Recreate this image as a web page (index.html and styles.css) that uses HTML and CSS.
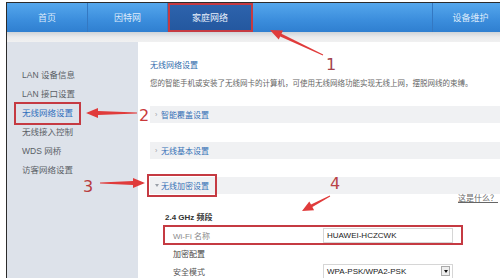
FILE: index.html
```html
<!DOCTYPE html>
<html lang="zh-CN">

<head>
    <meta charset="UTF-8">
    <title>家庭网络 - 无线网络设置</title>
    <link rel="stylesheet" href="styles.css">
</head>

<body>
    <div class="frame">
        <nav class="nav">
            <a class="tab tab-home">首页</a>
            <a class="tab tab-net">因特网</a>
            <a class="tab tab-home-net active mark">家庭网络</a>
            <span class="nav-fill"></span>
            <a class="tab tab-device">设备维护</a>
        </nav>
        <div class="shade"></div>

        <div class="main">
            <ul class="side">
                <li>LAN 设备信息</li>
                <li>LAN 接口设置</li>
                <li class="current"><span class="mark">无线网络设置</span></li>
                <li>无线接入控制</li>
                <li>WDS 网桥</li>
                <li>访客网络设置</li>
            </ul>

            <div class="content">
                <h3 class="title">无线网络设置</h3>
                <p class="desc">您的智能手机或安装了无线网卡的计算机，可使用无线网络功能实现无线上网，摆脱网线的束缚。</p>

                <div class="bar bar-first"><span class="caret">›</span>智能覆盖设置</div>
                <div class="bar"><span class="caret">›</span>无线基本设置</div>
                <div class="bar open"><span class="mark"><span class="caret caret-down"></span>无线加密设置</span></div>

                <div class="help"><a>这是什么？</a></div>

                <div class="form">
                    <div class="band">2.4 GHz 频段</div>
                    <div class="row mark">
                        <label>Wi-Fi 名称</label>
                        <span class="field">HUAWEI-HCZCWK</span>
                    </div>
                    <div class="group">加密配置</div>
                    <div class="row row-mode">
                        <label>安全模式</label>
                        <span class="field select">WPA-PSK/WPA2-PSK<span class="drop"></span></span>
                    </div>
                </div>
            </div>
        </div>
    </div>

    <!-- пометки поверх скриншота: стрелки и номера шагов -->
    <svg class="notes" width="500" height="278" viewBox="0 0 500 278">
        <g fill="#e03b3b">
            <polygon points="323.2,54.5 281.5,33.8 283,30.6 270,30 278.7,39.6 280.2,36.5 322.8,55.5" />
            <polygon points="137,112.5 98,111 98,108 86,113 98,118 98,115 137,113.5" />
            <polygon points="100,182.5 133,181 133,178 145,183 133,188 133,185 100,183.5" />
            <polygon points="329.8,195.6 311,204.5 309.3,201.4 302,211 314.1,210.2 312.4,207.1 330.2,196.4" />
        </g>
        <g class="num">
            <text x="326" y="70" fill="#a4434c">1</text>
            <text x="139" y="121" fill="#c9393a">2</text>
            <text x="83" y="192" fill="#b83c3e">3</text>
            <text x="330" y="189" fill="#b94246">4</text>
        </g>
    </svg>
</body>

</html>
```

FILE: styles.css
```css
* {
    box-sizing: border-box;
}

body {
    margin: 0;
    width: 500px;
    height: 278px;
    overflow: hidden;
    background-color: #fff;
    font-family: "Liberation Sans", "Noto Sans CJK SC", sans-serif;
    position: relative;
}

.frame {
    margin: 2px 0 0 6px;
    width: 494px;
    height: 276px;
    border-left: 1px solid #2b2b2b;
    border-top: 1px solid #2b2b2b;
    display: flex;
    flex-direction: column;
    overflow: hidden;
}

.mark {
    outline: 2px solid #c53a42;
}

/* верхнее меню */
.nav {
    height: 29px;
    flex: none;
    display: flex;
    background: linear-gradient(#55a7ec, #3b8ddc 60%, #2f7fd0);
}

.tab {
    display: flex;
    align-items: center;
    justify-content: center;
    font-size: 9px;
    color: #dceafa;
    border-right: 1px solid #3478c2;
}

.tab-home {
    width: 81px;
}

.tab-net {
    width: 80px;
}

.tab-home-net {
    width: 85px;
}

.active {
    background: linear-gradient(#2e64ad, #23579f);
    color: #e6eefa;
    outline-offset: -2px;
}

.nav-fill {
    flex: 1;
    border-right: 1px solid #3478c2;
}

.tab-device {
    width: 67px;
    border-right: none;
    padding-left: 8px;
}

.shade {
    height: 10px;
    flex: none;
    background: linear-gradient(#cfd3d8, #e9eaec 50%, #f1f1f1);
}

.main {
    flex: 1;
    display: flex;
}

/* левое меню */
.side {
    width: 131px;
    margin: 0;
    padding: 24px 0 0 15px;
    list-style: none;
    background-color: #dde2ea;
    font-size: 8.5px;
    color: #5a5f66;
}

.side li {
    line-height: 19px;
}

.current .mark {
    display: inline-block;
    margin-left: -5px;
    padding: 1px 5px;
    line-height: 15px;
    color: #2f6fbd;
    outline-offset: 1px;
}

/* контент */
.content {
    flex: 1;
    padding-left: 12px;
    font-size: 7.5px;
    color: #666;
}

.title {
    margin: 18px 0 0;
    font-size: 8px;
    font-weight: normal;
    line-height: 12px;
    color: #2f6aab;
}

.desc {
    margin: 6px 0 0;
    line-height: 12px;
}

.bar {
    height: 17px;
    margin-top: 19px;
    padding-left: 5px;
    display: flex;
    align-items: center;
    background-color: #f0f1f3;
    font-size: 8px;
    color: #3570b6;
}

.bar-first {
    margin-top: 16px;
}

.open {
    margin-top: 18px;
    padding-left: 0;
}

.open .mark {
    display: flex;
    align-items: center;
    padding: 0 5px;
    height: 17px;
    outline-offset: 1px;
}

.caret {
    width: 6px;
    color: #9aa0a8;
    font-size: 7px;
}

.caret-down::before {
    content: "";
    display: block;
    width: 0;
    height: 0;
    border-left: 2px solid transparent;
    border-right: 2px solid transparent;
    border-top: 3px solid #9aa0a8;
}

.help {
    text-align: right;
    padding-right: 2px;
    line-height: 10px;
    font-size: 8px;
}

.help a {
    color: #666;
    text-decoration: underline;
}

.form {
    padding-left: 15px;
}

.band {
    margin-top: 8px;
    line-height: 12px;
    font-size: 8px;
    font-weight: bold;
    color: #333;
}

.row {
    width: 296px;
    height: 16px;
    margin-top: 3px;
    padding: 0 8px;
    display: flex;
    align-items: center;
    outline-offset: 0;
}

.row label {
    width: 150px;
    color: #8a8a8a;
    font-size: 8px;
}

.field {
    width: 130px;
    height: 15px;
    padding-left: 3px;
    display: flex;
    align-items: center;
    border: 1px solid #d6d6d6;
    font-size: 8px;
    color: #222;
}

.group {
    margin-top: 6px;
    padding-left: 8px;
    line-height: 12px;
    font-size: 8px;
    color: #444;
}

.row-mode {
    margin-top: 2px;
}

.row-mode label {
    color: #555;
}

.select {
    justify-content: space-between;
    padding-right: 2px;
}

.drop {
    width: 9px;
    height: 10px;
    border: 1px solid #aaa;
    background-color: #eee;
    display: flex;
    align-items: center;
    justify-content: center;
}

.drop::before {
    content: "";
    border-left: 2px solid transparent;
    border-right: 2px solid transparent;
    border-top: 3px solid #111;
}

.notes {
    position: absolute;
    top: 0;
    left: 0;
    pointer-events: none;
}

.num {
    font-family: "DejaVu Sans", sans-serif;
    font-size: 16px;
}
```
